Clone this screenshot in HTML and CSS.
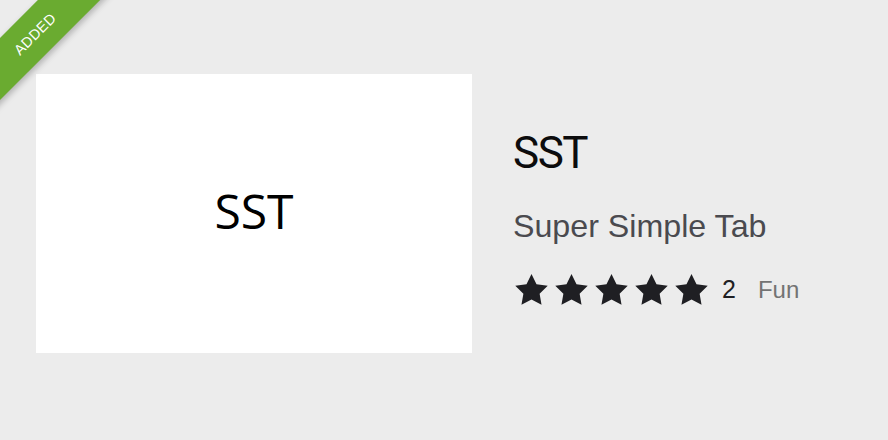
FILE: index.html
```html
<!DOCTYPE html>
<html lang="en">
<head>
<meta charset="utf-8">
<title>SST</title>
<link rel="stylesheet" href="styles.css">
</head>
<body>
<div class="page">
  <div class="ribbon"><span>ADDED</span></div>
  <div class="addon">
    <div class="preview"><span class="preview-text">SST</span></div>
    <div class="info">
      <h1 class="title">SST</h1>
      <p class="summary">Super Simple Tab</p>
      <div class="meta">
        <div class="stars">
          <svg class="star" viewBox="2 2 20 19.1"><path d="M12 2l3.09 6.26L22 9.27l-5 4.87 1.18 6.88L12 17.77l-6.18 3.25L7 14.14 2 9.27l6.91-1.01L12 2z"/></svg>
          <svg class="star" viewBox="2 2 20 19.1"><path d="M12 2l3.09 6.26L22 9.27l-5 4.87 1.18 6.88L12 17.77l-6.18 3.25L7 14.14 2 9.27l6.91-1.01L12 2z"/></svg>
          <svg class="star" viewBox="2 2 20 19.1"><path d="M12 2l3.09 6.26L22 9.27l-5 4.87 1.18 6.88L12 17.77l-6.18 3.25L7 14.14 2 9.27l6.91-1.01L12 2z"/></svg>
          <svg class="star" viewBox="2 2 20 19.1"><path d="M12 2l3.09 6.26L22 9.27l-5 4.87 1.18 6.88L12 17.77l-6.18 3.25L7 14.14 2 9.27l6.91-1.01L12 2z"/></svg>
          <svg class="star" viewBox="2 2 20 19.1"><path d="M12 2l3.09 6.26L22 9.27l-5 4.87 1.18 6.88L12 17.77l-6.18 3.25L7 14.14 2 9.27l6.91-1.01L12 2z"/></svg>
        </div>
        <span class="count">2</span>
        <span class="category">Fun</span>
      </div>
    </div>
  </div>
</div>
</body>
</html>
```

FILE: styles.css
```css
html, body {
  margin: 0;
  padding: 0;
  background: #ececec;
}

.page {
  position: relative;
  width: 888px;
  height: 440px;
  overflow: hidden;
}

.ribbon {
  position: absolute;
  left: -65px;
  top: 12px;
  width: 200px;
  height: 44px;
  background: #6aab30;
  transform: rotate(-45deg);
  box-shadow: 0 3px 6px rgba(0, 0, 0, 0.25);
  display: flex;
  align-items: center;
  justify-content: center;
  color: #ffffff;
  font-family: "Liberation Sans", Arial, sans-serif;
  font-size: 14.5px;
  letter-spacing: 0.3px;
}

.addon {
  display: flex;
  align-items: flex-start;
  gap: 41px;
  padding: 74px 0 0 36px;
}

.preview {
  width: 436px;
  height: 279px;
  background: #ffffff;
  display: flex;
  align-items: center;
  justify-content: center;
  flex-shrink: 0;
}

.preview-text {
  font-family: "Open Sans", sans-serif;
  font-size: 48px;
  line-height: 1;
  color: #000000;
  margin-top: -6px;
}

.info {
  margin-top: 54px;
  display: flex;
  flex-direction: column;
}

.title {
  margin: 0;
  font-family: Roboto, "Liberation Sans", sans-serif;
  font-weight: 400;
  font-size: 44px;
  line-height: 51px;
  letter-spacing: -1.5px;
  color: #0c0c0d;
}

.summary {
  margin: 29px 0 0;
  font-family: "Liberation Sans", Arial, sans-serif;
  font-size: 32.2px;
  line-height: 36px;
  color: #4a4a4f;
}

.meta {
  margin-top: 30px;
  display: flex;
  align-items: center;
  font-family: "Liberation Sans", Arial, sans-serif;
}

.stars {
  display: flex;
  gap: 7px;
  margin-left: 2px;
}

.star {
  width: 33px;
  height: 31px;
  fill: #1f1f23;
  display: block;
}

.count {
  margin-left: 14px;
  font-size: 25px;
  color: #1f1f23;
}

.category {
  margin-left: 22px;
  font-size: 24px;
  color: #737373;
}
```
